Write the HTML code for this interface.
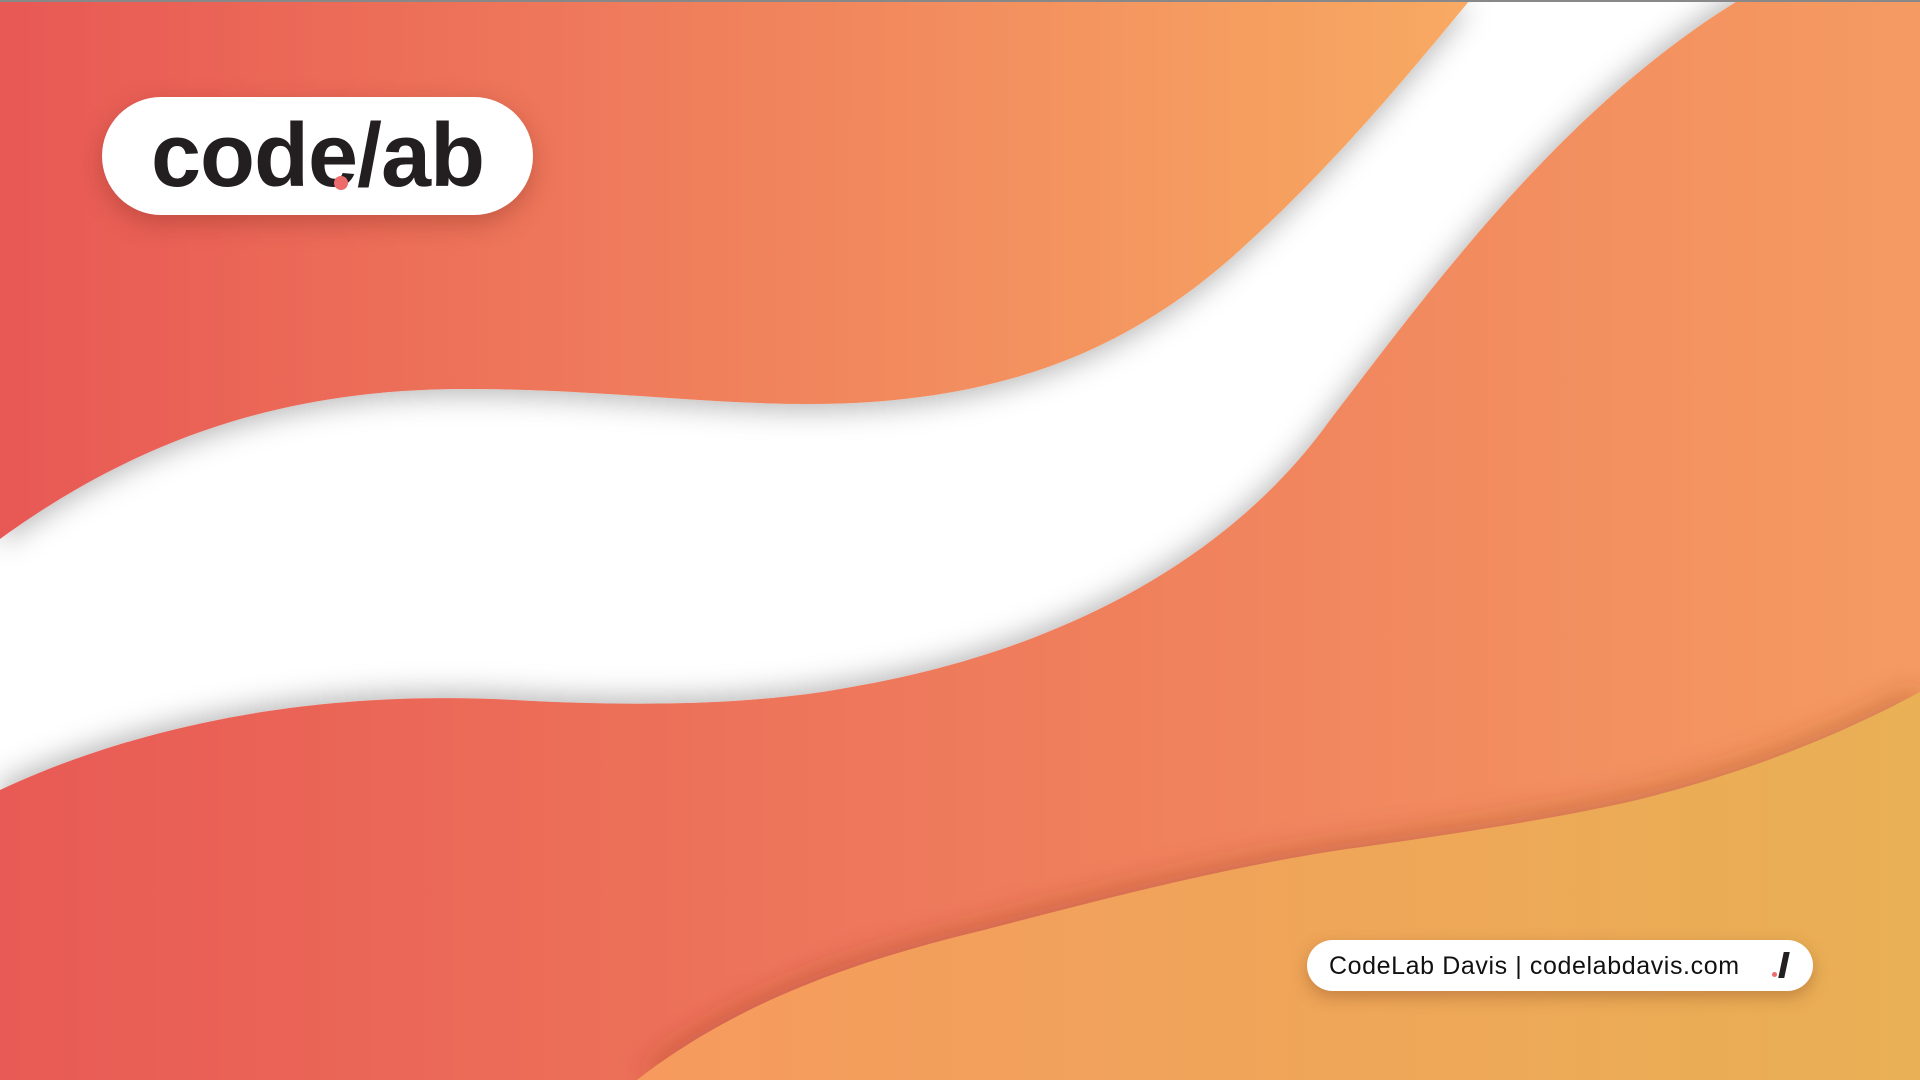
<!DOCTYPE html>
<html><head><meta charset="utf-8"><style>
html,body{margin:0;padding:0;width:1920px;height:1080px;overflow:hidden;background:#fff}
svg{position:absolute;left:0;top:0}
.logo{position:absolute;left:102px;top:97px;width:431px;height:118px;background:#fff;border-radius:59px;box-shadow:0 8px 24px rgba(120,40,30,.35);font-family:"Liberation Sans",sans-serif;font-weight:bold;font-size:90px;color:#231f20;line-height:118px;text-align:center;letter-spacing:-1px}
.dot{position:absolute;left:334px;top:176px;width:14px;height:14px;border-radius:50%;background:#ee6b6b}
.pill{position:absolute;left:1307px;top:940px;width:506px;height:51px;background:#fff;border-radius:26px;box-shadow:0 6px 16px rgba(120,60,30,.35);font-family:"Liberation Sans",sans-serif;font-size:25px;letter-spacing:0.6px;color:#111;line-height:53px;padding-left:22px;box-sizing:border-box}
.sl{position:absolute;left:474px;top:12px;width:6px;height:26px;background:#231f20;transform:skewX(-12deg)}
.sd{position:absolute;left:465px;top:32px;width:5px;height:5px;border-radius:50%;background:#ee6b6b}
</style></head><body>
<svg width="1920" height="1080" viewBox="0 0 1920 1080">
<defs>
<linearGradient id="g1" x1="0" x2="1470" gradientUnits="userSpaceOnUse" y1="0" y2="0"><stop offset="0" stop-color="#e85855"/><stop offset="1" stop-color="#f8aa63"/></linearGradient>
<linearGradient id="g2" x1="0" x2="1920" gradientUnits="userSpaceOnUse" y1="0" y2="0"><stop offset="0" stop-color="#e85a55"/><stop offset="1" stop-color="#f59b62"/></linearGradient>
<linearGradient id="g3" x1="637" x2="1920" gradientUnits="userSpaceOnUse" y1="0" y2="0"><stop offset="0" stop-color="#f69a5e"/><stop offset="1" stop-color="#e9b055"/></linearGradient>
<filter id="sh" x="-10%" y="-10%" width="120%" height="130%"><feDropShadow dx="0" dy="6" stdDeviation="14" flood-color="#000" flood-opacity=".28"/></filter>
<filter id="sh2" x="-10%" y="-30%" width="120%" height="160%"><feDropShadow dx="0" dy="-6" stdDeviation="14" flood-color="#000" flood-opacity=".28"/></filter>
<filter id="sh3" x="-10%" y="-30%" width="120%" height="160%"><feDropShadow dx="0" dy="-6" stdDeviation="14" flood-color="#8a3020" flood-opacity=".35"/></filter>
</defs>
<rect width="1920" height="1080" fill="#fff"/>
<path filter="url(#sh)" fill="url(#g1)" d="M0 0 H1470 C1420 60 1340 160 1240 250 C1130 350 1000 404 808 404 C700 404 600 389 465 389 C300 389 150 430 0 539 Z"/>
<path filter="url(#sh2)" fill="url(#g2)" d="M1739 0 H1920 V1080 H0 V790 C150 720 330 690 514 700 C640 707 760 705 857 686 C1060 650 1230 560 1330 420 C1430 290 1560 110 1739 0 Z"/>
<path filter="url(#sh3)" fill="url(#g3)" d="M637 1080 C740 1000 860 960 980 931 C1100 900 1220 868 1347 849 C1500 828 1600 810 1653 796 C1760 768 1850 730 1920 692 V1080 Z"/>
<rect width="1920" height="2" fill="#888"/>
</svg>
<div class="logo">code/ab</div>
<div class="dot"></div>
<div class="pill">CodeLab Davis | codelabdavis.com<div class="sd"></div><div class="sl"></div></div>
</body></html>
